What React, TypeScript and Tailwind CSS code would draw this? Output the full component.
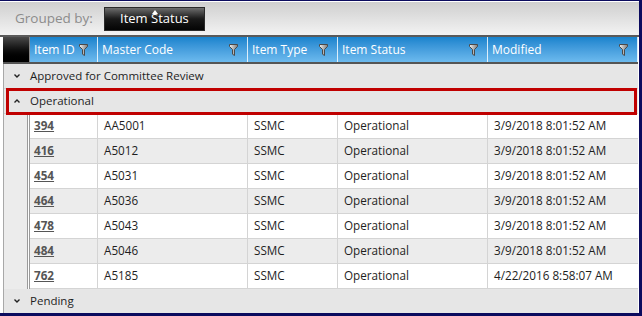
import React from 'react';

const rows = [
  { id: '394', code: 'AA5001', date: '3/9/2018 8:01:52 AM' },
  { id: '416', code: 'A5012', date: '3/9/2018 8:01:52 AM' },
  { id: '454', code: 'A5031', date: '3/9/2018 8:01:52 AM' },
  { id: '464', code: 'A5036', date: '3/9/2018 8:01:52 AM' },
  { id: '478', code: 'A5043', date: '3/9/2018 8:01:52 AM' },
  { id: '484', code: 'A5046', date: '3/9/2018 8:01:52 AM' },
  { id: '762', code: 'A5185', date: '4/22/2016 8:58:07 AM' },
];

const font = { fontFamily: '"Segoe UI", "Open Sans", "Noto Sans", sans-serif' };

function FilterIcon() {
  return (
    <svg width="9" height="12" viewBox="0 0 9 12" className="shrink-0">
      <defs>
        <linearGradient id="funnel" x1="0" x2="1" y1="0" y2="0">
          <stop offset="0" stopColor="#f0f0f0" />
          <stop offset="1" stopColor="#7c7c7c" />
        </linearGradient>
      </defs>
      <path
        d="M0.5 0.5 H8.5 V2.5 L5.5 5.5 V11.5 L3.5 10.2 V5.5 L0.5 2.5 Z"
        fill="url(#funnel)"
        stroke="#4a4a4a"
        strokeWidth="1"
      />
    </svg>
  );
}

function Chevron({ up }: { up?: boolean }) {
  return (
    <svg width="8" height="6" viewBox="0 0 8 6">
      <polyline
        points={up ? '1.5,4.5 4,2 6.5,4.5' : '1.5,1.5 4,4 6.5,1.5'}
        fill="none"
        stroke="#222"
        strokeWidth="1.4"
      />
    </svg>
  );
}

function HeaderCell({ label, w }: { label: string; w: string }) {
  return (
    <div className={`${w} flex h-full items-center justify-between border-r border-white/80 pl-[4px] pr-[9px]`}>
      <span>{label}</span>
      <FilterIcon />
    </div>
  );
}

function GroupRow({ label, up, marked }: { label: string; up?: boolean; marked?: boolean }) {
  return (
    <div className="relative flex h-[25px] items-center border-b border-[#d2d2d2] bg-[#e6e6e6] text-[11.5px] text-[#1e1e1e]">
      <div className="flex w-[26px] justify-center">
        <Chevron up={up} />
      </div>
      <span>{label}</span>
      {marked && (
        <div className="pointer-events-none absolute top-[-1px] bottom-[-2px] left-[2px] right-[1px] border-[3px] border-[#c00000]" />
      )}
    </div>
  );
}

export default function App() {
  return (
    <div
      style={font}
      className="flex h-[316px] w-[642px] flex-col overflow-hidden border-t border-r-[3px] border-b-[3px] border-[#0b0b5e] bg-white"
    >
      {/* toolbar */}
      <div className="flex h-[34px] shrink-0 items-center border-t border-white bg-linear-to-b from-[#cfcfcf] to-[#f3f3f3] pl-[15px]">
        <span className="text-[13.5px] text-[#8c8c8c]">Grouped by:</span>
        <div className="relative ml-[11px] flex h-[24px] w-[101px] items-center justify-center border border-[#2a2a2a] bg-linear-to-b from-[#6e6e6e] via-[#1a1a1a] to-[#050505] text-[13px] text-white">
          <svg width="6" height="4" viewBox="0 0 6 4" className="absolute top-[2px] left-[47px]">
            <polygon points="0,4 3,0 6,4" fill="#fff" />
          </svg>
          Item Status
        </div>
      </div>

      <div className="flex flex-1 flex-col border-t-2 border-[#5a5a5a] pl-[3px] pr-[1px]">
        {/* header */}
        <div className="flex h-[27px] shrink-0 border-b-2 border-[#555] text-[12px] text-white">
          <div className="w-[27px] border-r border-[#888] bg-linear-to-b from-[#4a4a4a] via-[#111] to-[#000]" />
          <div className="flex flex-1 bg-linear-to-b from-[#1683cd] to-[#6cbaee]">
            <HeaderCell label="Item ID" w="w-[68px]" />
            <HeaderCell label="Master Code" w="w-[150px]" />
            <HeaderCell label="Item Type" w="w-[90px]" />
            <HeaderCell label="Item Status" w="w-[150px]" />
            <HeaderCell label="Modified" w="flex-1" />
          </div>
        </div>

        <div className="flex flex-1 flex-col border-l border-[#a8a8a8]">
          <GroupRow label="Approved for Committee Review" />
          <GroupRow label="Operational" up marked />

          {rows.map((r, i) => (
            <div key={r.id} className="flex h-[25px] text-[11.7px] text-[#1e1e1e]">
              <div className="w-[23px] bg-[#ececec]" />
              <div className="w-[3px] border-x border-[#9a9a9a] bg-white" />
              <div
                className={`flex flex-1 border-b border-[#d4d4d4] ${i % 2 === 1 ? 'bg-[#ececec]' : 'bg-white'}`}
              >
                <div className="flex w-[68px] items-center border-r border-[#d4d4d4] pl-[4px]">
                  <span className="font-bold text-[#555] underline">{r.id}</span>
                </div>
                <div className="flex w-[150px] items-center border-r border-[#d4d4d4] pl-[6px]">{r.code}</div>
                <div className="flex w-[90px] items-center border-r border-[#d4d4d4] pl-[6px]">SSMC</div>
                <div className="flex w-[150px] items-center border-r border-[#d4d4d4] pl-[6px]">Operational</div>
                <div className="flex flex-1 items-center pl-[6px]">{r.date}</div>
              </div>
            </div>
          ))}

          <GroupRow label="Pending" />
        </div>
      </div>
    </div>
  );
}
